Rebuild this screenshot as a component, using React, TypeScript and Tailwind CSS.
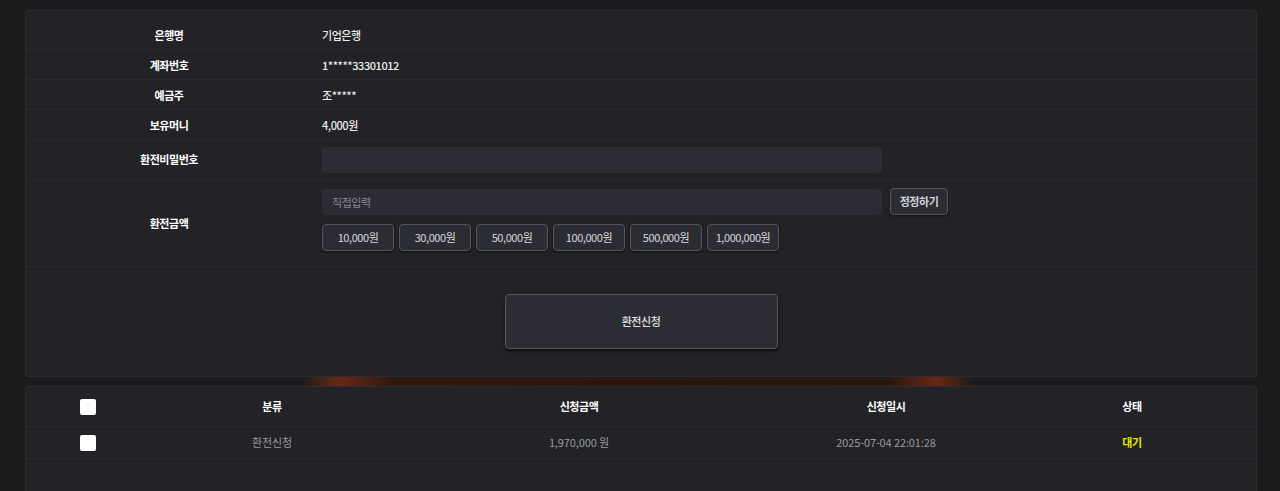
import { useState } from 'react';

const font = "font-['Noto_Sans_CJK_KR','Noto_Sans',sans-serif]";

const infoRows = [
  { label: '은행명', value: '기업은행' },
  { label: '계좌번호', value: '1*****33301012' },
  { label: '예금주', value: '조*****' },
  { label: '보유머니', value: '4,000원' },
];

const amounts = ['10,000원', '30,000원', '50,000원', '100,000원', '500,000원', '1,000,000원'];

const history = [{ type: '환전신청', amount: '1,970,000 원', date: '2025-07-04 22:01:28', status: '대기' }];

const Checkbox = () => <span className="block h-[16px] w-[16px] rounded-[2px] bg-white" />;

export default function App() {
  const [amount, setAmount] = useState('');

  return (
    <div className={`${font} min-h-screen bg-[#1c1c1c] pl-[25px] pt-[10px] text-[11px] tracking-[-0.04em]`}>
      <div className="w-[1232px]">
        {/* Exchange form */}
        <div className="rounded-[3px] border border-[#2c2c33] bg-[#222227] pt-[9px]">
          {infoRows.map((row) => (
            <div key={row.label} className="flex h-[30px] items-center border-b border-[#2a2a30] pt-[1px]">
              <div className="w-[286px] text-center font-bold text-white">{row.label}</div>
              <div className="pl-[10px] font-medium text-[#ececec]">{row.value}</div>
            </div>
          ))}

          {/* Password */}
          <div className="flex h-[40px] items-center border-b border-[#2a2a30]">
            <div className="w-[286px] text-center font-bold text-white">환전비밀번호</div>
            <div className="pl-[10px]">
              <input
                type="password"
                className="h-[26px] w-[560px] rounded-[3px] bg-[#2c2c34] px-[10px] text-white outline-none"
              />
            </div>
          </div>

          {/* Amount */}
          <div className="flex h-[87px] border-b border-[#2a2a30]">
            <div className="w-[286px] self-center text-center font-bold text-white">환전금액</div>
            <div className="flex flex-col gap-[9px] pl-[10px] pt-[8px]">
              <div className="flex items-center gap-[8px]">
                <input
                  value={amount}
                  onChange={(e) => setAmount(e.target.value)}
                  placeholder="직접입력"
                  className="h-[26px] w-[560px] rounded-[3px] bg-[#2c2c34] px-[10px] text-white outline-none placeholder:text-[#8a8a90]"
                />
                <button className="h-[27px] w-[58px] rounded-[4px] border border-[#56565d] bg-[#2c2c34] font-bold text-[#d4d4d8] shadow-[0_1px_2px_rgba(0,0,0,0.6)]">
                  정정하기
                </button>
              </div>
              <div className="flex gap-[5px]">
                {amounts.map((a) => (
                  <button
                    key={a}
                    onClick={() => setAmount(a)}
                    className="h-[27px] w-[72px] rounded-[4px] border border-[#56565d] bg-[#2c2c34] text-[#d8d8dc] shadow-[0_1px_2px_rgba(0,0,0,0.6)]"
                  >
                    {a}
                  </button>
                ))}
              </div>
            </div>
          </div>

          {/* Submit */}
          <div className="flex h-[109px] items-center justify-center">
            <button className="h-[55px] w-[273px] rounded-[4px] border border-[#55555c] bg-[#2d2d36] font-medium text-[#e0e0e4] shadow-[0_2px_3px_rgba(0,0,0,0.6)]">
              환전신청
            </button>
          </div>
        </div>

        {/* Glow strip */}
        <div className="h-[9px] bg-[linear-gradient(to_right,transparent_0%,transparent_22.5%,rgba(140,45,15,0.7)_25.5%,rgba(48,24,14,0.85)_30%,rgba(40,22,14,0.85)_70%,rgba(140,45,15,0.7)_74%,transparent_77%,transparent_100%)]" />

        {/* History */}
        <div className="min-h-[110px] rounded-[3px] border border-[#2c2c33] bg-[#222227]">
          <div className="grid h-[40px] grid-cols-[124px_244px_370px_244px_1fr] items-center border-b border-[#2a2a30] font-bold text-white">
            <div className="flex justify-center"><Checkbox /></div>
            <div className="text-center">분류</div>
            <div className="text-center">신청금액</div>
            <div className="text-center">신청일시</div>
            <div className="text-center">상태</div>
          </div>
          {history.map((h) => (
            <div
              key={h.date}
              className="grid h-[32px] grid-cols-[124px_244px_370px_244px_1fr] items-center border-b border-[#2a2a30] tracking-[-0.01em] text-[#9a9aa0]"
            >
              <div className="flex justify-center"><Checkbox /></div>
              <div className="text-center">{h.type}</div>
              <div className="text-center">{h.amount}</div>
              <div className="text-center">{h.date}</div>
              <div className="text-center font-bold tracking-[-0.04em] text-[#e6e600]">{h.status}</div>
            </div>
          ))}
        </div>
      </div>
    </div>
  );
}
